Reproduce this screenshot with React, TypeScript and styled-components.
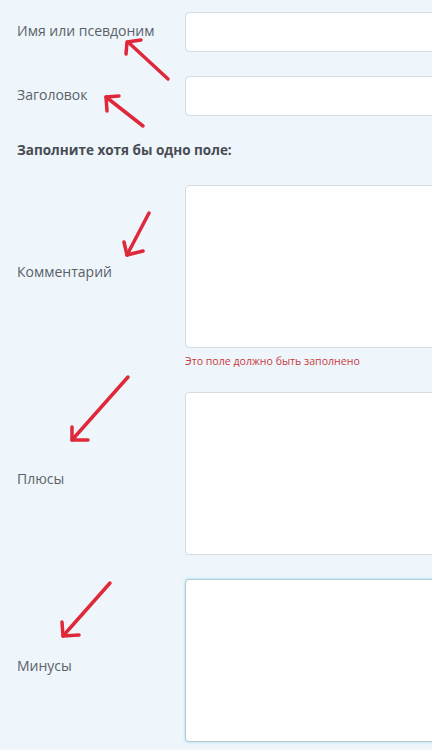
import React from "react";
import styled, { createGlobalStyle } from "styled-components";

const GlobalStyle = createGlobalStyle`
  html, body {
    margin: 0;
    padding: 0;
    background: #eef6fc;
    overflow: hidden;
  }
  body {
    font-family: "Open Sans", "Noto Sans", sans-serif;
  }
`;

type Field = {
  label: string;
  kind: "input" | "textarea";
  error?: string;
  focused?: boolean;
};

const topFields: Field[] = [
  { label: "Имя или псевдоним", kind: "input" },
  { label: "Заголовок", kind: "input" },
];

const bottomFields: Field[] = [
  { label: "Комментарий", kind: "textarea", error: "Это поле должно быть заполнено" },
  { label: "Плюсы", kind: "textarea" },
  { label: "Минусы", kind: "textarea", focused: true },
];

// red hand-drawn annotation arrows: shaft + head
const arrows = [
  { line: "M168 79 L128 42", head: "M126 54 L127 42 L141 40" },
  { line: "M143 126 L106 97", head: "M107 111 L106 97 L119 96" },
  { line: "M149 213 L127 255", head: "M124 242 L127 255 L143 251" },
  { line: "M128 377 L72 440", head: "M72 427 L72 440 L88 440" },
  { line: "M110 583 L63 636", head: "M62 622 L63 636 L79 635" },
];

function FormRow({ label, kind, error, focused }: Field) {
  return (
    <Row>
      <Label $tall={kind === "textarea"}>{label}</Label>
      {kind === "input" ? <TextInput type="text" /> : <TextArea $focused={focused} />}
      {error && <ErrorText>{error}</ErrorText>}
    </Row>
  );
}

function App() {
  return (
    <Page>
      <GlobalStyle />
      <Form>
        {topFields.map((f) => (
          <FormRow key={f.label} {...f} />
        ))}
        <Heading>Заполните хотя бы одно поле:</Heading>
        {bottomFields.map((f) => (
          <FormRow key={f.label} {...f} />
        ))}
      </Form>
      <Arrows width="432" height="750" viewBox="0 0 432 750">
        {arrows.map((a, i) => (
          <g key={i}>
            <path d={a.line} />
            <path d={a.head} />
          </g>
        ))}
      </Arrows>
    </Page>
  );
}

const Page = styled.div`
  position: relative;
  width: 432px;
  height: 750px;
  overflow: hidden;
`;

const Form = styled.form`
  display: flex;
  flex-direction: column;
  gap: 24px;
  padding: 12px 0 0 17px;
`;

const Row = styled.div`
  display: grid;
  grid-template-columns: 168px 320px;
  align-items: center;
`;

const Label = styled.label<{ $tall?: boolean }>`
  font-size: 14px;
  line-height: 20px;
  color: #5b6167;
  padding-top: ${(p) => (p.$tall ? "11px" : "0")};
  padding-bottom: ${(p) => (p.$tall ? "0" : "2px")};
`;

const TextInput = styled.input`
  box-sizing: border-box;
  width: 100%;
  height: 40px;
  margin: 0;
  border: 1px solid #d6dbe0;
  border-radius: 4px;
  background: #ffffff;
  outline: none;
`;

const TextArea = styled.textarea<{ $focused?: boolean }>`
  box-sizing: border-box;
  display: block;
  width: 100%;
  height: 163px;
  margin: 0;
  resize: none;
  border: 1px solid ${(p) => (p.$focused ? "#b4c9d2" : "#d6dbe0")};
  border-radius: 4px;
  background: #ffffff;
  outline: none;
  box-shadow: ${(p) => (p.$focused ? "0 0 2px 1px rgba(140, 215, 235, 0.45)" : "none")};
`;

const ErrorText = styled.div`
  grid-column: 2;
  margin-top: 6px;
  font-size: 10.6px;
  line-height: 14px;
  color: #c93a3c;
`;

const Heading = styled.p`
  margin: 0;
  font-size: 13.5px;
  font-weight: 700;
  line-height: 21px;
  color: #474c52;
`;

const Arrows = styled.svg`
  position: absolute;
  left: 0;
  top: 0;
  pointer-events: none;
  fill: none;
  stroke: #e0283b;
  stroke-width: 3.5;
  stroke-linecap: round;
  stroke-linejoin: round;
`;

export default App;
